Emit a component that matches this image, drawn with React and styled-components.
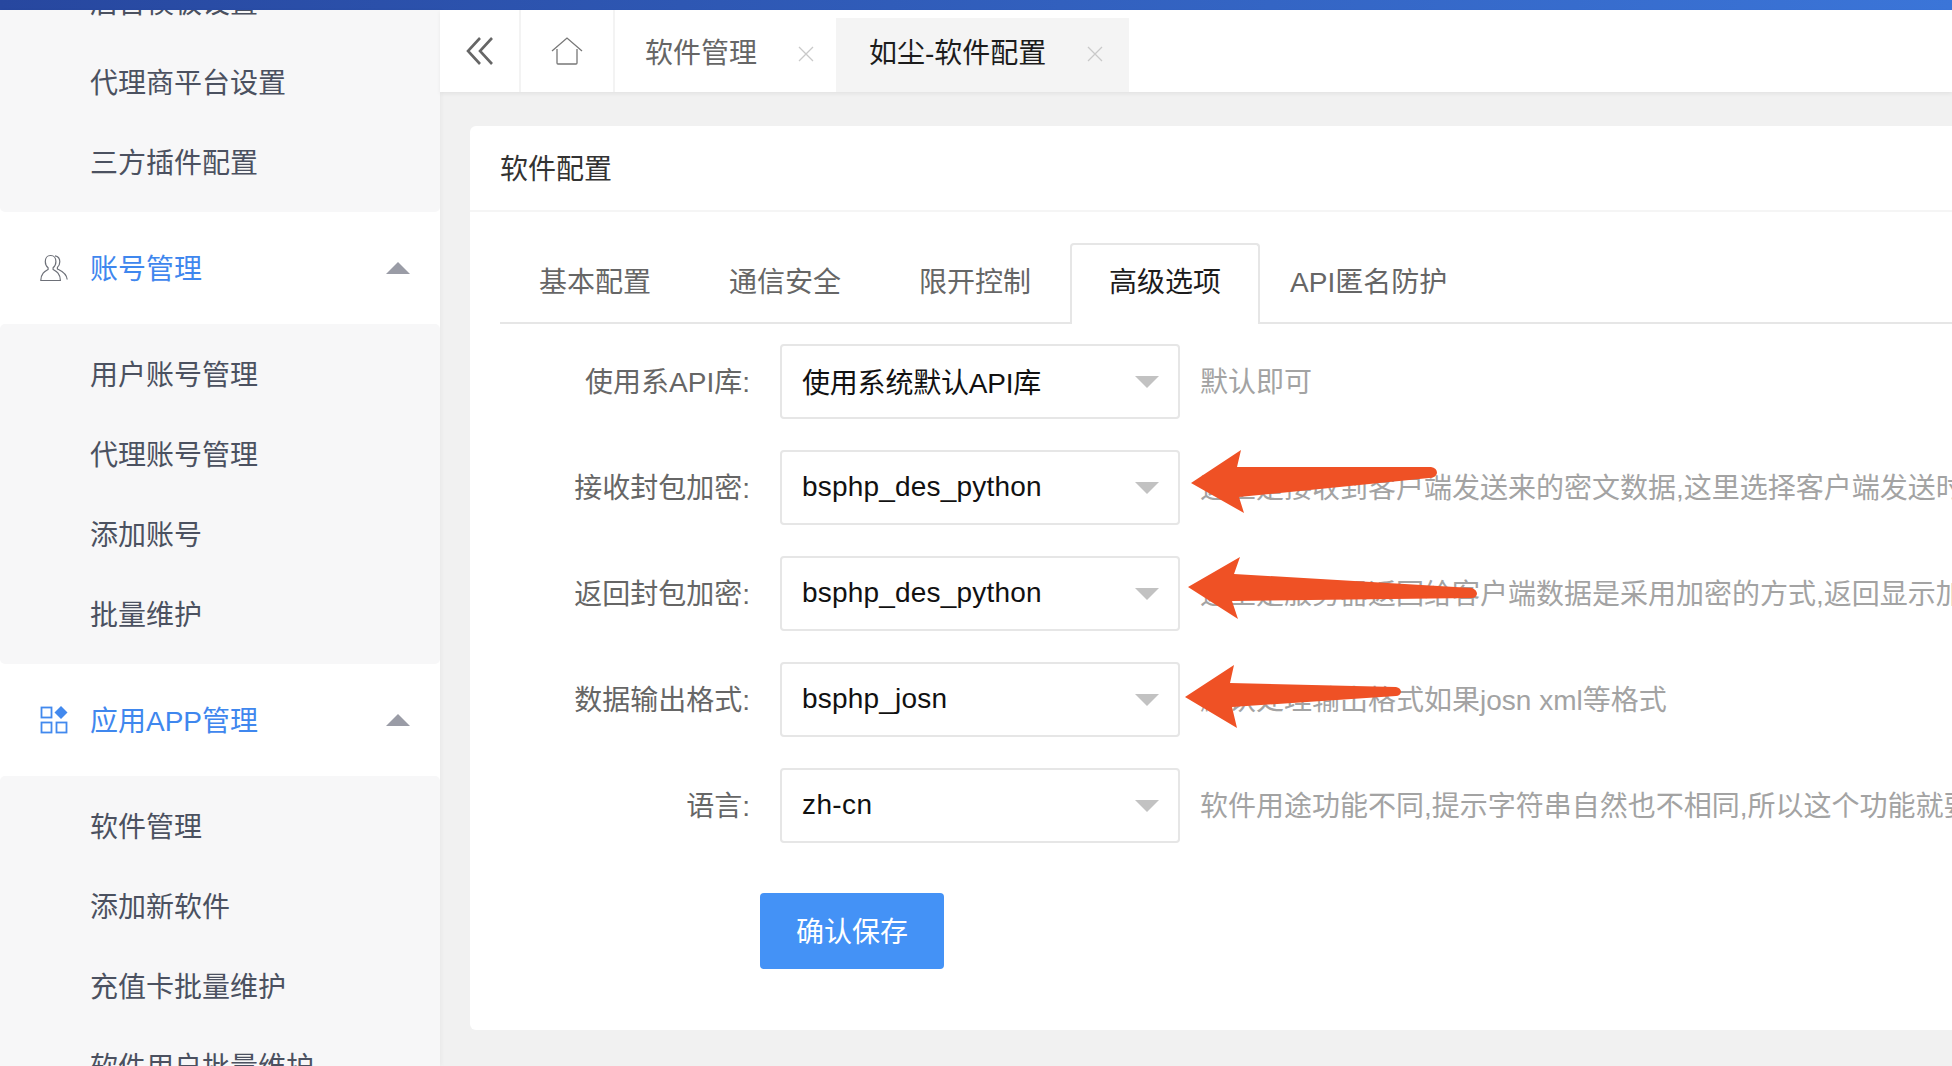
import React from 'react';
import styled, { createGlobalStyle } from 'styled-components';

const GlobalStyle = createGlobalStyle`
  html, body {
    margin: 0;
    padding: 0;
    height: 100%;
    overflow: hidden;
  }
  body {
    font-family: "Liberation Sans", "Noto Sans CJK SC", sans-serif;
    font-size: 28px;
    background: #f1f1f1;
  }
`;

const Page = styled.div`
  position: relative;
  width: 1952px;
  height: 1066px;
  overflow: hidden;
  display: flex;
  flex-direction: column;
`;

const TopBar = styled.div`
  height: 10px;
  flex: none;
  background: linear-gradient(90deg, #27479f 0%, #3b75d8 100%);
`;

const Body = styled.div`
  flex: 1;
  display: flex;
  min-height: 0;
`;

const Sidebar = styled.aside`
  position: relative;
  width: 440px;
  flex: none;
  overflow: hidden;
  background: #fff;
  box-shadow: 2px 0 4px rgba(0, 0, 0, 0.03);
`;

const SideScroll = styled.div`
  margin-top: -58px;
`;

const SubList = styled.div`
  background: #f7f7f8;
  border-radius: 5px;
  padding: 10px 0;
`;

const SubItem = styled.div`
  height: 80px;
  line-height: 83px;
  padding-left: 90px;
  color: #4b5160;
  white-space: nowrap;
`;

const GroupHead = styled.div`
  height: 112px;
  display: flex;
  align-items: center;
  padding: 0 30px 0 40px;
  color: #3f87ee;
`;

const GroupIcon = styled.svg`
  width: 28px;
  height: 28px;
  flex: none;
  margin-right: 22px;
`;

const GroupName = styled.span`
  flex: 1;
  padding-bottom: 3px;
`;

const CaretUp = styled.span`
  width: 0;
  height: 0;
  border-left: 12px solid transparent;
  border-right: 12px solid transparent;
  border-bottom: 12px solid #9a9ca6;
`;

const Main = styled.main`
  flex: 1;
  min-width: 0;
  display: flex;
  flex-direction: column;
`;

const TabBar = styled.div`
  position: relative;
  height: 82px;
  flex: none;
  display: flex;
  background: #fff;
  box-shadow: 0 2px 4px rgba(0, 0, 0, 0.06);
`;

const IconCell = styled.div`
  width: ${p => p.$w}px;
  flex: none;
  display: flex;
  align-items: center;
  justify-content: center;
  border-right: 2px solid #f3f3f3;
`;

const PageTab = styled.div`
  display: flex;
  align-items: center;
  padding: 0 ${p => (p.$active ? 26 : 22)}px 0 ${p => (p.$active ? 33 : 30)}px;
  color: ${p => (p.$active ? '#1c1c1c' : '#666')};
  background: ${p =>
    p.$active ? 'linear-gradient(#fff 8px, #f4f4f4 8px)' : 'transparent'};
`;

const CloseIcon = styled.svg`
  width: 16px;
  height: 16px;
  margin: 6px 0 0 41px;
`;

const Content = styled.div`
  flex: 1;
  padding: 34px 0 0 30px;
  min-height: 0;
`;

const Card = styled.section`
  width: 1560px;
  height: 904px;
  background: #fff;
  border-radius: 6px;
`;

const CardHead = styled.div`
  height: 86px;
  box-sizing: border-box;
  padding: 0 0 2px 30px;
  display: flex;
  align-items: center;
  color: #333;
  border-bottom: 2px solid #f5f5f5;
`;

const CardBody = styled.div`
  padding: 31px 0 0 30px;
`;

const FormTabs = styled.div`
  display: flex;
  height: 79px;
  border-bottom: 2px solid #e6e6e6;
  margin-bottom: 20px;
`;

const FormTab = styled.div`
  height: 79px;
  line-height: 80px;
  box-sizing: border-box;
  padding: 0 ${p => p.$padRight ?? 38}px 0 ${p => p.$padLeft ?? 38}px;
  color: #666;
  white-space: nowrap;
`;

const ActiveFormTab = styled.div`
  height: 81px;
  line-height: 76px;
  box-sizing: border-box;
  padding: 0 37px;
  margin-right: 2px;
  color: #1c1c1c;
  background: #fff;
  border: 2px solid #e6e6e6;
  border-bottom: 0;
  border-radius: 4px 4px 0 0;
  white-space: nowrap;
`;

const FormRow = styled.div`
  display: flex;
  align-items: center;
  height: 75px;
  margin-bottom: 31px;
  white-space: nowrap;
`;

const Label = styled.label`
  width: 250px;
  flex: none;
  text-align: right;
  color: #666;
  margin-right: 30px;
  padding-bottom: 3px;
`;

const SelectBox = styled.div`
  width: 400px;
  height: 75px;
  flex: none;
  box-sizing: border-box;
  border: 2px solid #e6e6e6;
  border-radius: 4px;
  padding: 0 19px 0 20px;
  display: flex;
  align-items: center;
  justify-content: space-between;
  color: #111;
`;

const SelectValue = styled.span`
  letter-spacing: ${p => p.$spacing}px;
  padding-bottom: 1px;
`;

const CaretDown = styled.span`
  width: 0;
  height: 0;
  border-left: 12px solid transparent;
  border-right: 12px solid transparent;
  border-top: 12px solid #c2c2c2;
`;

const Hint = styled.span`
  margin-left: 20px;
  color: #a3a3a3;
  padding-bottom: 3px;
`;

const SaveButton = styled.button`
  display: block;
  width: 184px;
  height: 76px;
  margin: 50px 0 0 260px;
  padding: 0 0 3px;
  border: 0;
  border-radius: 4px;
  background: #4492f6;
  color: #fff;
  font: inherit;
`;

const ArrowLayer = styled.svg`
  position: absolute;
  left: 0;
  top: 0;
  width: 1952px;
  height: 1066px;
  pointer-events: none;
`;

const accountItems = ['用户账号管理', '代理账号管理', '添加账号', '批量维护'];
const appItems = ['软件管理', '添加新软件', '充值卡批量维护', '软件用户批量维护'];

const rows = [
  { label: '使用系API库:', value: '使用系统默认API库', spacing: -0.2, hint: '默认即可' },
  {
    label: '接收封包加密:',
    value: 'bsphp_des_python',
    spacing: 0.2,
    hint: '这里是接收到客户端发送来的密文数据,这里选择客户端发送时使用的加密方式',
  },
  {
    label: '返回封包加密:',
    value: 'bsphp_des_python',
    spacing: 0.2,
    hint: '这里是服务器返回给客户端数据是采用加密的方式,返回显示加密的数据内容',
  },
  {
    label: '数据输出格式:',
    value: 'bsphp_josn',
    spacing: 0.2,
    hint: '默认处理输出格式如果josn xml等格式',
  },
  {
    label: '语言:',
    value: 'zh-cn',
    spacing: 0.4,
    hint: '软件用途功能不同,提示字符串自然也不相同,所以这个功能就要看具体的需求',
  },
];

const arrows = [
  'M1191 483 L1241 450 L1237 467 L1431 467 Q1437 468 1437 473 Q1436 478 1429 478 L1239 497 L1244 513 Z',
  'M1188 587 L1240 557 L1234 574 L1472 588 Q1477 590 1477 594 Q1476 598 1472 598 L1232 601 L1238 619 Z',
  'M1185 697 L1234 665 L1230 683 L1396 687 Q1401 688 1401 692 Q1400 696 1396 696 L1232 707 L1237 728 Z',
];

const Close = () => (
  <CloseIcon viewBox="0 0 16 16" fill="none" stroke="#c9c9c9" strokeWidth="1.3">
    <path d="M1 1 L15 15 M15 1 L1 15" />
  </CloseIcon>
);

const App = () => {
  return (
    <Page>
      <GlobalStyle />
      <TopBar />
      <Body>
        <Sidebar>
          <SideScroll>
            <SubList>
              <SubItem>后台模板设置</SubItem>
              <SubItem>代理商平台设置</SubItem>
              <SubItem>三方插件配置</SubItem>
            </SubList>
            <GroupHead>
              <GroupIcon viewBox="0 0 28 28" fill="none" stroke="#6d7078" strokeWidth="1.2">
                <path d="M10.5 1.5c-3.4 0-5.2 2.8-5.2 6 0 2.6 1.2 5 2.8 6.2v1.8C5 17.2 1 19 .8 26.500h19.600c-.2-7.500-4.200-9.300-7.300-11v-1.800c1.600-1.200 2.800-3.600 2.800-6.200 0-3.200-1.800-6-5.200-6z" />
                <path d="M15 1.800c3 .5 4.800 3 4.800 5.900 0 2.400-1 4.400-2.400 5.700v1.600c3.200 1.600 9 3.500 9.800 10.500" />
              </GroupIcon>
              <GroupName>账号管理</GroupName>
              <CaretUp />
            </GroupHead>
            <SubList>
              {accountItems.map(item => (
                <SubItem key={item}>{item}</SubItem>
              ))}
            </SubList>
            <GroupHead>
              <GroupIcon viewBox="0 0 28 28" fill="none" stroke="#4289ee" strokeWidth="1.8">
                <rect x="1.500" y="1.500" width="10" height="10" />
                <rect x="1.500" y="16.500" width="10" height="10" />
                <rect x="16.500" y="16.500" width="10" height="10" />
                <path d="M21 0 L27.500 6.500 L21 13 L14.500 6.500 Z" fill="#4289ee" stroke="none" />
              </GroupIcon>
              <GroupName>应用APP管理</GroupName>
              <CaretUp />
            </GroupHead>
            <SubList>
              {appItems.map(item => (
                <SubItem key={item}>{item}</SubItem>
              ))}
            </SubList>
          </SideScroll>
        </Sidebar>
        <Main>
          <TabBar>
            <IconCell $w={79}>
              <svg width="28" height="28" viewBox="0 0 28 28" fill="none" stroke="#666" strokeWidth="2.600">
                <path d="M14 1 L2 14 L14 27 M26 1 L14 14 L26 27" />
              </svg>
            </IconCell>
            <IconCell $w={92}>
              <svg width="32" height="28" viewBox="0 0 32 28" fill="none" stroke="#777" strokeWidth="1.300">
                <path d="M1 14 L16 1 L31 14 M6 12 V26 Q6 27 7 27 H25 Q26 27 26 26 V12" />
              </svg>
            </IconCell>
            <PageTab>
              软件管理
              <Close />
            </PageTab>
            <PageTab $active>
              如尘-软件配置
              <Close />
            </PageTab>
          </TabBar>
          <Content>
            <Card>
              <CardHead>软件配置</CardHead>
              <CardBody>
                <FormTabs>
                  <FormTab $padLeft={39} $padRight={39}>基本配置</FormTab>
                  <FormTab $padLeft={39} $padRight={39}>通信安全</FormTab>
                  <FormTab $padLeft={39} $padRight={39}>限开控制</FormTab>
                  <ActiveFormTab>高级选项</ActiveFormTab>
                  <FormTab $padLeft={28}>API匿名防护</FormTab>
                </FormTabs>
                {rows.map(row => (
                  <FormRow key={row.label}>
                    <Label>{row.label}</Label>
                    <SelectBox>
                      <SelectValue $spacing={row.spacing}>{row.value}</SelectValue>
                      <CaretDown />
                    </SelectBox>
                    <Hint>{row.hint}</Hint>
                  </FormRow>
                ))}
                <SaveButton>确认保存</SaveButton>
              </CardBody>
            </Card>
          </Content>
        </Main>
      </Body>
      <ArrowLayer viewBox="0 0 1952 1066">
        {arrows.map(d => (
          <path key={d} d={d} fill="#ef5125" />
        ))}
      </ArrowLayer>
    </Page>
  );
};

export default App;
